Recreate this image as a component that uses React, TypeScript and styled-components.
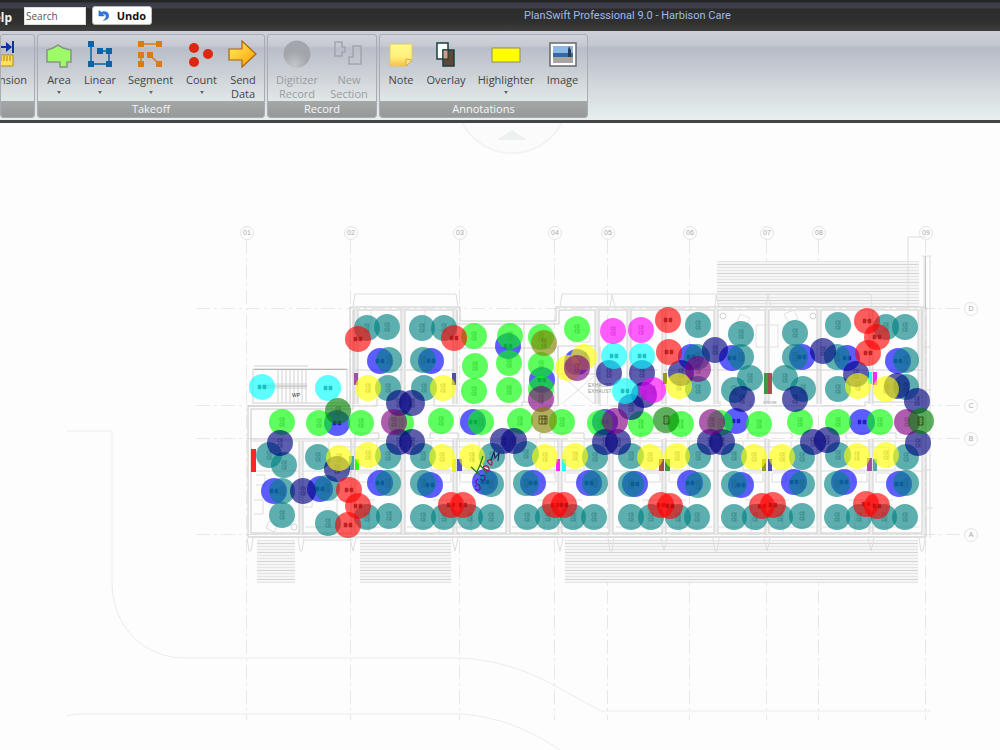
import React from "react";
import styled, { createGlobalStyle } from "styled-components";

const Global = createGlobalStyle`
  * { box-sizing: border-box; }
  body { margin: 0; background: #fdfdfd; font-family: "Open Sans", "Noto Sans", sans-serif; }
`;
const Page = styled.main`
  display: flex; flex-direction: column; min-height: 100vh; overflow: hidden;
`;
const TitleBar = styled.header`
  display: flex; align-items: flex-start; height: 31px; padding-top: 6px;
  background: linear-gradient(#262629 0, #262629 2px, #3b3c48 3px, #3e404c 8px, #2b2b2b 9px, #303030 22px, #3e3e3e 31px);
`;
const MenuLink = styled.a`
  display: flex; justify-content: flex-end; width: 24px; flex: none; padding-right: 12px; padding-top: 4px;
  color: #f2f2f2; font: 700 12px/16px "Noto Sans", sans-serif; text-decoration: none; white-space: nowrap;
`;
const Search = styled.input`
  width: 62px; height: 18px; margin-top: 1px; border: 1px solid #ddd; padding: 0 1px; background: #fff;
  font: 10px/14px "Open Sans", sans-serif; color: #333; border-radius: 0;
  &::placeholder { color: #555; opacity: 1; }
`;
const Undo = styled.button`
  display: flex; align-items: center; gap: 7px; width: 60px; height: 19px; margin-left: 6px; padding: 0 5px;
  border: 1px solid #bbb; border-radius: 3px; background: #fff;
  font: 700 11px/16px "Open Sans", sans-serif; color: #111;
`;
const Title = styled.h1`
  margin: 0 0 0 372px; font: 400 11px/20px Roboto, sans-serif; color: #9dbbe8; white-space: nowrap;
`;
const Ribbon = styled.nav`
  display: flex; gap: 2px; height: 92px; padding: 3px 0 2px; border-bottom: 3px solid #454545;
  background: linear-gradient(#cdd0d6 0, #c4c8d0 14px, #b6bbc6 17px, #d2d8dc 55px, #e6eeee 88px);
`;
const GroupBox = styled.section<{ $w: number }>`
  width: ${(p) => p.$w}px; flex: none; display: flex; flex-direction: column; overflow: hidden;
  border: 1px solid #a9acb2; border-radius: 3px;
  background: linear-gradient(#d0d3d9 0, #c6c9d1 11px, #b9bdc8 13px, #ced3d8 42px, #e2e9e9 68px);
`;
const Tools = styled.div<{ $pad: number }>`
  flex: 1; display: flex; align-items: flex-start; padding: 5px 0 0 ${(p) => p.$pad}px;
`;
const GroupName = styled.h2`
  margin: 0; height: 16px; flex: none; background: linear-gradient(#a5a8a8, #979999); color: #f6f6f6;
  font-size: 11px; line-height: 15px; font-weight: 400; text-align: center;
`;
const ToolButton = styled.button<{ $w: number }>`
  width: ${(p) => p.$w}px; flex: none; display: flex; flex-direction: column; align-items: center;
  border: 0; padding: 0; background: none; color: #454545; font: 11px/14px "Open Sans", sans-serif; white-space: pre-line;
  svg { display: block; }
  &:disabled { color: #9a9c9f; }
`;
const Label = styled.span`margin-top: 3px;`;
const Arrow = styled.i`
  margin-top: 4px; border: 2px solid transparent; border-top: 3px solid #666; border-bottom: 0;
`;
const Workspace = styled.div`flex: 1; background: #fdfdfd;`;
const Drawing = styled.svg`display: block; width: 100%; height: auto;`;

function Tool({ w, name, arrow, disabled, children }: {
  w: number; name: string; arrow?: boolean; disabled?: boolean; children: React.ReactNode;
}) {
  return (
    <ToolButton $w={w} disabled={disabled} type="button">
      <svg width="32" height="30" viewBox="0 0 32 30">{children}</svg>
      <Label>{name}</Label>
      {arrow && <Arrow />}
    </ToolButton>
  );
}

function Group({ w, pad, name, children }: { w: number; pad: number; name: string; children: React.ReactNode }) {
  return (
    <GroupBox $w={w}>
      <Tools $pad={pad}>{children}</Tools>
      <GroupName>{name}</GroupName>
    </GroupBox>
  );
}

const nodes = (pts: number[][], color: string) =>
  pts.map(([x, y]) => <rect key={`${x}-${y}`} x={x - 3} y={y - 3} width="6" height="6" fill={color} />);

const colors = {
  teal: "#008080", red: "#ff0000", blue: "#0000ff", lime: "#00ff00", yellow: "#ffff00", cyan: "#00ffff",
  magenta: "#ff00ff", navy: "#000080", purple: "#800080", olive: "#808000", green: "#008000",
};
type Color = keyof typeof colors;

const markers: [Color, number[][]][] = [
  ["blue", [[380, 361], [431, 361], [337, 423], [473, 422], [274, 491], [320, 489], [380, 483], [430, 485], [485, 482], [533, 483], [589, 483], [635, 484], [690, 483], [741, 485], [794, 482], [844, 482], [899, 484], [508, 346], [542, 380], [577, 362], [691, 357], [732, 358], [802, 357], [847, 358], [898, 361], [605, 422], [736, 421], [862, 422]]],
  ["teal", [[367, 328], [387, 327], [422, 328], [444, 328], [389, 360], [423, 360], [388, 388], [424, 388], [269, 455], [284, 465], [318, 457], [388, 456], [423, 456], [282, 491], [327, 488], [388, 483], [423, 483], [282, 515], [328, 523], [367, 517], [389, 516], [423, 517], [444, 517], [470, 517],
    [492, 456], [526, 454], [595, 457], [631, 456], [698, 456], [491, 484], [526, 483], [595, 483], [631, 484], [698, 485], [491, 517], [527, 517], [548, 517], [573, 517], [594, 517], [631, 517], [651, 517], [678, 517], [697, 517],
    [698, 325], [697, 357], [698, 389], [741, 334], [741, 357], [750, 378], [734, 390], [795, 333], [795, 357], [785, 378], [803, 389], [838, 325], [837, 357], [838, 389], [886, 327], [905, 327], [906, 360], [906, 387],
    [734, 456], [802, 457], [838, 455], [906, 457], [734, 484], [802, 484], [837, 484], [906, 483], [734, 517], [755, 517], [780, 517], [802, 516], [837, 517], [859, 517], [884, 517], [905, 517]]],
  ["lime", [[282, 422], [319, 423], [361, 423], [401, 423], [441, 421], [481, 422], [520, 421], [562, 422], [600, 423], [641, 424], [681, 424], [720, 423], [759, 424], [800, 422], [838, 422], [880, 422], [474, 336], [510, 336], [541, 337], [577, 329], [475, 366], [509, 363], [541, 365], [541, 389], [474, 391], [509, 390]]],
  ["navy", [[399, 403], [412, 403], [280, 443], [399, 442], [412, 442], [337, 469], [303, 491], [503, 441], [514, 441], [605, 442], [618, 442], [631, 407], [644, 395], [609, 373], [642, 373], [681, 373], [715, 350], [742, 399], [795, 399], [823, 351], [856, 374], [897, 386], [917, 401], [710, 442], [722, 442], [813, 442], [827, 440], [918, 443]]],
  ["yellow", [[368, 388], [443, 388], [339, 458], [368, 455], [442, 457], [472, 457], [545, 457], [575, 456], [650, 457], [677, 456], [584, 357], [568, 368], [679, 386], [754, 457], [782, 457], [857, 456], [886, 455], [858, 386], [886, 389]]],
  ["cyan", [[262, 387], [328, 388], [614, 356], [642, 356], [625, 391]]],
  ["magenta", [[613, 331], [641, 330], [653, 390]]],
  ["purple", [[394, 422], [541, 399], [577, 368], [615, 421], [698, 369], [712, 422], [907, 422]]],
  ["olive", [[544, 343], [544, 420]]],
  ["green", [[338, 411], [666, 420], [921, 421]]],
  ["red", [[358, 339], [454, 338], [349, 490], [358, 506], [348, 525], [451, 505], [463, 505], [555, 505], [564, 505], [661, 505], [670, 506], [762, 506], [773, 505], [866, 504], [877, 506], [668, 320], [669, 352], [867, 321], [877, 337], [868, 353]]],
];

const panels: [string, number, number, number, number][] = [
  ["#ff0000", 251, 449, 5, 23], ["#993399", 354, 373, 4, 12], ["#333399", 452, 373, 4, 12], ["#339999", 349, 456, 5, 14],
  ["#00ff00", 355, 459, 4, 11], ["#eeee00", 452, 459, 4, 13], ["#3333cc", 457, 459, 5, 12], ["#ff00ff", 556, 459, 4, 12],
  ["#00ffff", 562, 459, 4, 12], ["#993333", 659, 459, 5, 12], ["#228822", 665, 459, 5, 12], ["#888800", 762, 459, 4, 12],
  ["#333399", 768, 459, 4, 12], ["#993399", 867, 458, 5, 13], ["#339999", 873, 459, 4, 12], ["#00ffff", 868, 372, 4, 12],
  ["#ff00ff", 873, 372, 4, 13], ["#228822", 764, 373, 4, 21], ["#993333", 768, 373, 4, 21], ["#888800", 663, 373, 4, 11],
];

const columns: [string, number][] = [["01", 247], ["02", 351], ["03", 460], ["04", 555], ["05", 608], ["06", 690], ["07", 767], ["08", 819], ["09", 926]];
const rows: [string, number][] = [["D", 309], ["C", 406], ["B", 439], ["A", 535]];
const decks = [[257, 540, 38, 42], [360, 540, 91, 42], [565, 540, 353, 42], [717, 261, 202, 46]];
const roomWalls = [403, 508, 611, 716, 819];
const halfWalls = [353, 455, 560, 664, 767, 871];

function Deck({ box: [x, y, w, h] }: { box: number[] }) {
  const count = Math.floor(h / 3);
  return (
    <g>
      <rect x={x} y={y} width={w} height={h} fill="#f5f5f5" />
      {Array.from({ length: count + 1 }, (_, i) => (
        <path key={i} d={`M${x} ${y + i * 3 + 0.5}h${w}`} stroke={i % 3 === 1 ? "#d4d4d4" : "#e4e4e4"} />
      ))}
    </g>
  );
}

function DoubleWall({ x, y1, y2 }: { x: number; y1: number; y2: number }) {
  return (
    <g>
      <rect x={x - 2} y={y1} width="4" height={y2 - y1} fill="#eee" stroke="none" />
      <path d={`M${x - 2} ${y1}V${y2}M${x + 2} ${y1}V${y2}`} stroke="#d0d0d0" />
    </g>
  );
}

function Building() {
  return (
    <g fill="none" stroke="#d2d2d2">
      <path d="M350 307H460V321H556V307H926V537H248V406H350zM353 310H457V324H559V310H922V533H251V409H353z" stroke="#cacaca" />
      <path d="M353 307l2-13H456l2 13M560 307l2-13H871l1 13M610 307l2-12 3 12M715 307l1-12 3 12M766 307l2-12 3 12" stroke="#dedede" />
      <path d="M924 256v282M930 256v282M922 256h9M908 307V237h18M920 309h8M922 347h8M922 390h8M922 470h8M925 508h8" stroke="#dedede" />
      <path d="M925.500 256v52" stroke="#c4c4c4" />
      <path d="M253 404V369H347V404M254 366h54M254 403h92M262 384h45M262 388h45M278 370v33M282 370v33M286 370v33M290 370v33M294 370v33M298 370v33M302 370v33M306 370v33" />
      <path d="M254 369.500H347M262 386h45" stroke="#b4b4b4" />
      <path d="M248 406h103M353 406h24v-8M434 398v8h88v-4h20v4h16v-60M558 346v60M600 346v60M610 406h110v-5M750 401v5h115v-4h54M250 439H379v-6H355v6M430 439v-6h28v6h110M540 439v-6h44v6h50M640 439v-6h46v6M748 439v-6h44v6M846 439v-6h50v6" />
      <path d="M250 441H922M250 471H922M250 537h672M250 534h672" stroke="#dadada" />
      {roomWalls.map((x) => <DoubleWall key={x} x={x} y1={439} y2={534} />)}
      {halfWalls.map((x) => <DoubleWall key={x} x={x} y1={439} y2={534} />)}
      {[403, 716, 767, 819].map((x) => <DoubleWall key={x} x={x} y1={310} y2={404} />)}
      {[356, 455, 597, 629, 664, 871, 920].map((x) => <DoubleWall key={x} x={x} y1={310} y2={404} />)}
      <DoubleWall x={301} y1={441} y2={534} />
      <path d="M355 370h48M406 370h48M462 348h94M524 322v80M716 370h22M795 370h75M870 370h52M558 346h38M664 370h50M630 370h28M560 374h38" />
      <path d="M562 376l32 28M594 376l-32 28M572 330h18v12h-18zM356 325h12M371 310v20h20M425 310v20h20M756 325h22v22h-22zM740 314l10 4-4 9-9-4zM784 314l10-4 4 9-9 4z" stroke="#e2e2e2" />
      {halfWalls.map((x) => (
        <g key={x} stroke="#dedede">
          <path d={`M${x - 24} 441v29h20M${x + 24} 441v29h-20M${x - 18} 473h14v9h-14zM${x + 5} 473h14v9h-14zM${x - 22} 500h44M${x - 16} 500v33M${x + 16} 500v33M${x - 48} 527h96M${x - 20} 447h38v21`} />
          <path d={`M${x - 3} 538l3 13 3-13`} />
        </g>
      ))}
      {[250, 301, 611, 716, 922].map((x) => <path key={x} d={`M${x - 3} 538l2 13h2l2-13`} stroke="#dedede" />)}
      <path d="M303 540h50M256 475h9v10h-9M254 500h9v14h-9M269 521l9 4-4 7-8-4zM303 493h9v14h-9" stroke="#dedede" />
      <circle cx="294" cy="527" r="3" /><circle cx="723" cy="316" r="3" /><circle cx="813" cy="316" r="3" />
    </g>
  );
}

const boldMarks: Color[] = ["blue", "cyan", "red"];

function MarkerSymbol({ x, y, color }: { x: number; y: number; color: Color }) {
  if (boldMarks.includes(color)) {
    return <path d={`M${x - 4} ${y - 2}h3v4h-3zM${x + 1} ${y - 2}h3v4h-3zM${x - 4} ${y}h8`} fill="#222" stroke="#222" strokeWidth="0.5" opacity="0.75" />;
  }
  return <path d={`M${x - 2} ${y - 4}h3v3h-3zM${x - 2} ${y + 1}h3v3h-3zM${x + 2} ${y - 5}v10`} stroke="#333" strokeWidth="0.8" opacity="0.5" fill="none" />;
}

function Plan() {
  return (
    <Drawing viewBox="0 123 1000 627" role="img" aria-label="Floor plan takeoff" fontFamily="Liberation Sans, sans-serif">
      <g fill="none" stroke="#ececec">
        <circle cx="512" cy="97" r="56" stroke="#f3f3f3" strokeWidth="2" fill="#fbfbfb" />
        <path d="M497 140l15-10 15 10z" fill="#eef1f1" stroke="none" />
        <path d="M67 431H112V584C113 628 145 658 185 658H458C520 660 555 687 601 711H931M67 716l9-2H462C500 717 532 731 560 750" />
      </g>
      <g fill="none" stroke="#e8e8e8" strokeDasharray="14 4 3 4">
        {columns.map(([n, x]) => <path key={n} d={`M${x - 0.5} 240V720`} />)}
        {rows.map(([n, y]) => <path key={n} d={`M196 ${y - 0.5}H964`} />)}
      </g>
      {[...columns.map(([n, x]) => [n, x, 233] as const), ...rows.map(([n, y]) => [n, 971, y] as const)].map(([n, x, y]) => (
        <g key={n}>
          <circle cx={x} cy={y} r="6.5" fill="#fdfdfd" stroke="#e4e4e4" />
          <text x={x} y={y + 2} fontSize="7" textAnchor="middle" fill="#a8a8a8">{n}</text>
        </g>
      ))}
      {decks.map((d) => <Deck key={d.join()} box={d} />)}
      <Building />
      <g fontSize="5" fill="#999">
        <text x="292" y="397" fill="#333">WP</text><text x="588" y="387">EXHAUST</text><text x="588" y="393">EXHAUST</text>
        <text x="763" y="404" fontSize="4">STORE</text>
      </g>
      {panels.map(([c, x, y, w, h]) => <rect key={`${x}-${y}`} x={x} y={y} width={w} height={h} fill={c} opacity="0.85" />)}
      {markers.map(([c, pts]) => (
        <g key={c}>
          {pts.map(([x, y], i) => (
            <g key={i}>
              <MarkerSymbol x={x} y={y} color={c} />
              <circle cx={x} cy={y} r="13" fill={colors[c]} opacity="0.63" />
            </g>
          ))}
        </g>
      ))}
      <path d="M539 416h8v8h-8zM542 416v8M545 416v8M539 419h8M664 416h5v8h-5zM918 417h5v8h-5z" stroke="#333300" fill="none" opacity="0.6" />
      <g fill="none" strokeWidth="1.2">
        <path d="M471 467l9 8M483 456l-3 9 7 8M480 465l-4 9" stroke="#158015" />
        <path d="M475 487q4-5 5 0t-5 2M478 479q-4 3-1 5M480 476q5-2 5 2t-5 1" stroke="#5b168c" />
        <path d="M483 467q5-3 6 2t-6-2M487 461q5-3 5 2t-5-2" stroke="#a01848" />
        <path d="M491 460l3-8 1 6 4-5-1 8" stroke="#202060" />
      </g>
    </Drawing>
  );
}

export default function App() {
  return (
    <Page>
      <Global />
      <TitleBar>
        <MenuLink href="#help">Help</MenuLink>
        <Search aria-label="Search" placeholder="Search" />
        <Undo type="button">
          <svg width="13" height="13" viewBox="0 0 13 13"><path d="M1 1v6h6L5 5q4-1 4 3 0 2-3 4 6-1 6-5 0-5-6-5L4 3z" fill="#2d7be0" stroke="#1b55b8" strokeWidth="0.5" /></svg>
          Undo
        </Undo>
        <Title>PlanSwift Professional 9.0 - Harbison Care</Title>
      </TitleBar>
      <Ribbon aria-label="Tools">
        <GroupBox $w={35}>
          <Tools $pad={0}>
            <ToolButton $w={24} type="button" aria-label="Dimension">
              <svg width="32" height="30" viewBox="0 0 32 30">
                <path d="M0 7h14M16 1v12" stroke="#0a34a0" strokeWidth="2" /><path d="M9 2l6 5-6 5z" fill="#0a34a0" />
                <path d="M-2 15h18v11H-2z" fill="#ffe060" stroke="#b58912" /><path d="M4 16v5M7 16v5M10 16v5M13 16v5" stroke="#a47b10" />
              </svg>
              <Label>nsion</Label>
            </ToolButton>
          </Tools>
          <GroupName />
        </GroupBox>
        <Group w={228} pad={2} name="Takeoff">
          <Tool w={38} name="Area" arrow><path d="M4 10l6-2 5-3 5 3 8 2v12h-4v5h-7v-5H4z" fill="#9dfb68" stroke="#8a918a" strokeWidth="1.5" /></Tool>
          <Tool w={44} name="Linear" arrow>
            <path d="M7 4v20h18V11h-9" fill="none" stroke="#0d62a4" strokeWidth="1.5" />{nodes([[7, 4], [7, 24], [25, 24], [25, 11], [16, 11]], "#0d62a4")}
          </Tool>
          <Tool w={57} name="Segment" arrow>
            <path d="M6 4h18M6 15v9M15 15l9 9" fill="none" stroke="#dd7a14" strokeWidth="1.5" />{nodes([[6, 4], [24, 4], [6, 15], [6, 24], [15, 15], [24, 24]], "#dd7a14")}
          </Tool>
          <Tool w={45} name="Count" arrow><g fill="#dc2810"><circle cx="8" cy="8" r="5" /><circle cx="22" cy="14" r="5" /><circle cx="8" cy="22" r="5" /></g></Tool>
          <Tool w={38} name={"Send\nData"}>
            <defs><linearGradient id="send" x2="1" y2="1"><stop stopColor="#fff060" /><stop offset="1" stopColor="#ff9c00" /></linearGradient></defs>
            <path d="M2 9h13V1l14 13-14 13v-7H2z" fill="url(#send)" stroke="#a86510" strokeWidth="1.2" />
          </Tool>
        </Group>
        <Group w={110} pad={4} name="Record">
          <Tool w={50} name={"Digitizer\nRecord"} disabled>
            <defs><radialGradient id="rec" cx="40%" cy="90%"><stop stopColor="#c2c5c9" /><stop offset="1" stopColor="#a2a5ab" /></radialGradient></defs>
            <circle cx="16" cy="14" r="13.5" fill="url(#rec)" />
          </Tool>
          <Tool w={54} name={"New\nSection"} disabled><path d="M2 2h7v5h3v5H9v4H2zM20 6h8v18h-12v-7h4z" fill="none" stroke="#a2a5aa" strokeWidth="1.5" /></Tool>
        </Group>
        <Group w={209} pad={0} name="Annotations">
          <Tool w={42} name="Note">
            <defs><linearGradient id="note" y2="1" x2="0"><stop stopColor="#fff98c" /><stop offset=".6" stopColor="#fff07a" /><stop offset="1" stopColor="#f3c14a" /></linearGradient></defs>
            <path d="M5 4h22v16l-6 6H5z" fill="url(#note)" stroke="#dfca6a" /><path d="M27 20l-6-1v7z" fill="#ffe68a" stroke="#dca93c" />
          </Tool>
          <Tool w={48} name="Overlay"><rect x="7" y="3" width="11" height="16" fill="#fff" stroke="#163f3d" strokeWidth="1.5" /><rect x="13" y="10" width="11" height="16" fill="#5f4636" stroke="#163f3d" strokeWidth="1.5" /><rect x="13" y="10" width="5" height="9" fill="#c9a08c" stroke="#163f3d" /></Tool>
          <Tool w={72} name="Highlighter" arrow><rect x="2" y="8" width="28" height="14" fill="#ff0" stroke="#8e8e66" /></Tool>
          <Tool w={41} name="Image">
            <rect x="3" y="3" width="26" height="23" fill="#fff" stroke="#66696d" strokeWidth="1.5" /><rect x="6" y="6" width="20" height="17" fill="#8db7e5" /><rect x="6" y="13" width="20" height="4" fill="#346aa1" /><rect x="6" y="17" width="20" height="6" fill="#a7a5a2" /><path d="M22 6l2 4v7h-3v-7z" fill="#263d56" />
          </Tool>
        </Group>
      </Ribbon>
      <Workspace><Plan /></Workspace>
    </Page>
  );
}
